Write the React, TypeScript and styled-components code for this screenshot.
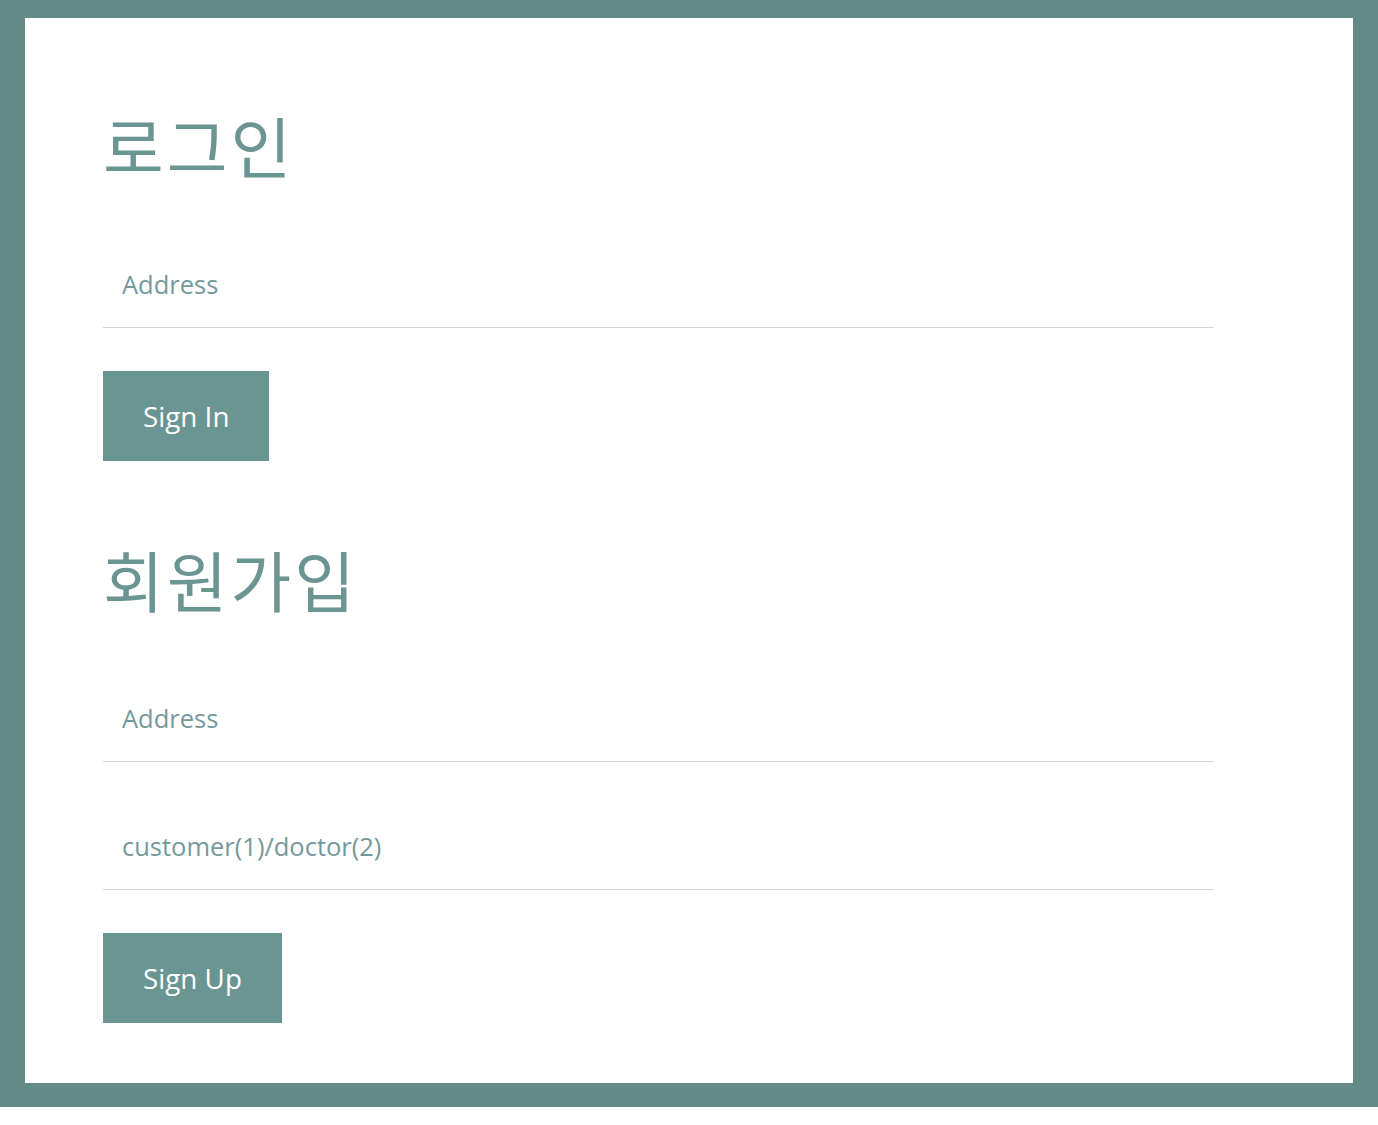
import React from "react";
import styled, { createGlobalStyle } from "styled-components";

const Global = createGlobalStyle`
  html, body { margin: 0; padding: 0; background: #ffffff; }
  * { box-sizing: border-box; }
`;

const Frame = styled.div`
  background: #628a87;
  padding: 18px 25px 24px 25px;
`;

const Panel = styled.main`
  background: #ffffff;
  padding: 80px 78px 60px 78px;
  display: flex;
  flex-direction: column;
  align-items: flex-start;
`;

const Heading = styled.h1<{ $first?: boolean }>`
  margin: ${(p) => (p.$first ? "0" : "71px")} 0 8px 0;
  font-family: "Noto Sans CJK KR", "Noto Sans", sans-serif;
  font-weight: 400;
  font-size: 66px;
  line-height: 92px;
  height: 92px;
  color: #6b9593;
  letter-spacing: 3px;
`;

const Field = styled.input`
  width: 1111px;
  height: 88px;
  margin-top: 42px;
  padding: 0 0 0 19px;
  border: none;
  border-bottom: 1.5px solid #d3d7db;
  outline: none;
  background: transparent;
  font-family: "Open Sans", "Noto Sans", sans-serif;
  font-size: 25.5px;
  color: #6b9593;
  &::placeholder { color: #75999a; }
`;

const NextField = styled(Field)`
  margin-top: 40px;
`;

const Button = styled.button`
  margin-top: 43px;
  height: 90px;
  padding: 0 40px;
  border: none;
  background: #6b9593;
  color: #ffffff;
  font-family: "Open Sans", "Noto Sans", sans-serif;
  font-size: 27.8px;
  cursor: pointer;
`;

export default function App() {
  return (
    <>
      <Global />
      <Frame>
        <Panel>
          <Heading $first>로그인</Heading>
          <Field placeholder="Address" />
          <Button>Sign In</Button>
          <Heading>회원가입</Heading>
          <Field placeholder="Address" />
          <NextField placeholder="customer(1)/doctor(2)" />
          <Button>Sign Up</Button>
        </Panel>
      </Frame>
    </>
  );
}
